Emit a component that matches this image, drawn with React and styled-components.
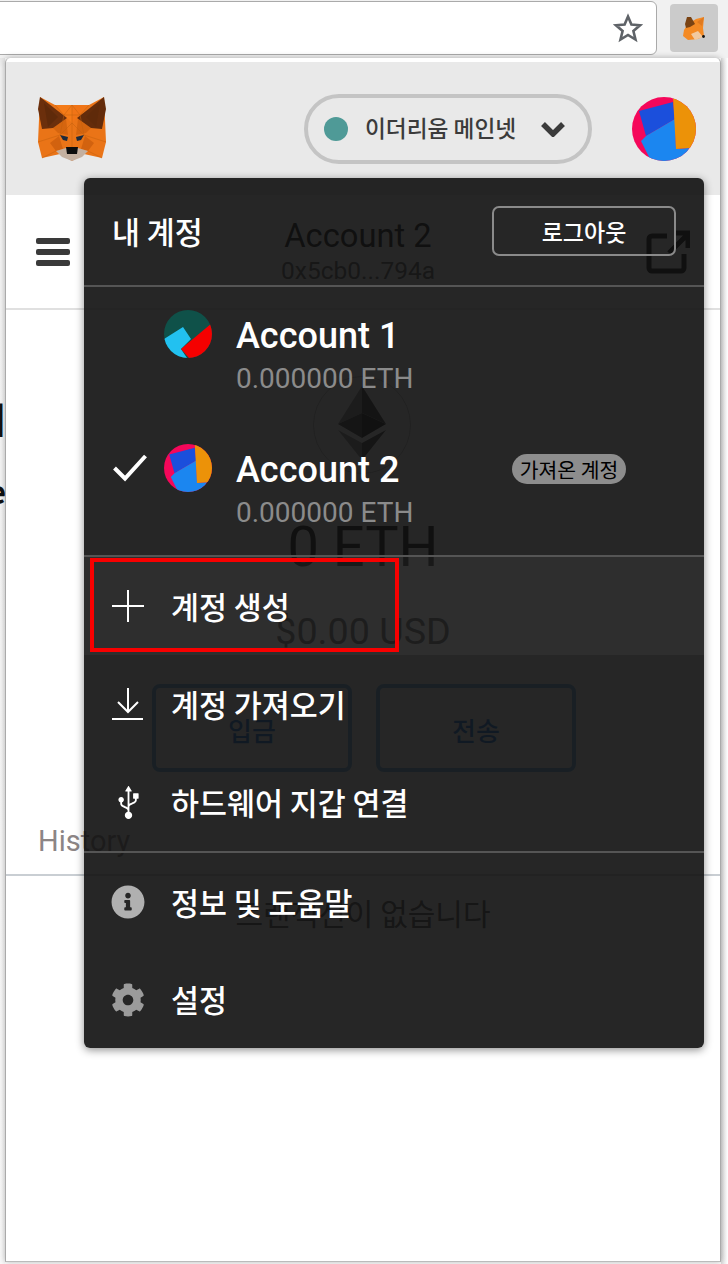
import React from "react";
import styled, { createGlobalStyle } from "styled-components";
import { FaInfoCircle, FaCog, FaUsb } from "react-icons/fa";

const Global = createGlobalStyle`
  html, body { margin: 0; padding: 0; background: #fff; overflow: hidden; }
  * { box-sizing: border-box; }
  body { font-family: Roboto, "Noto Sans CJK KR", sans-serif; }
`;

const Page = styled.div`
  width: 728px;
  height: 1264px;
  overflow: hidden;
  display: flex;
  flex-direction: column;
`;
const Toolbar = styled.div`
  height: 58px;
  flex: none;
  display: flex;
  background: #f1f1f1;
  padding-top: 1px;
`;
const AddressBar = styled.div`
  width: 658px;
  height: 54px;
  margin-left: -1px;
  background: #fff;
  border: 1px solid #aaa;
  border-radius: 0 6px 6px 0;
  display: flex;
  align-items: center;
  justify-content: flex-end;
  padding-right: 13px;
`;
const ExtensionButton = styled.div`
  width: 48px;
  height: 48px;
  margin: 3px 0 0 13px;
  background: #cbcbcb;
  border-radius: 4px;
  display: flex;
  align-items: center;
  justify-content: center;
`;
const Stage = styled.div`
  flex: 1;
  display: grid;
  grid-template-columns: 5px 716px 7px;
  min-height: 0;
`;
const Behind = styled.div`
  overflow: hidden;
  display: flex;
  flex-direction: column;
  align-items: flex-end;
  padding-top: 340px;
  background: linear-gradient(#e8e8e8 0, #f4f4f4 10px, #fafafa 100%);
  color: #111;
  white-space: nowrap;
`;
const BehindWord = styled.span`
  font: ${(p) => (p.$bold ? "700 32px/40px" : "400 36px/40px")} "Noto Sans CJK KR", sans-serif;
  margin-bottom: ${(p) => p.$gap || 0}px;
  margin-right: -1px;
`;
const Popup = styled.div`
  position: relative;
  height: 1204px;
  background: #fff;
  border-left: 1px solid #aaa;
  border-right: 1px solid #aaa;
  border-bottom: 1px solid #bbb;
  border-radius: 5px 5px 0 0;
  box-shadow: 0 0 6px rgba(0, 0, 0, 0.3);
  padding-top: 4px;
  display: flex;
  flex-direction: column;
`;
const AppHeader = styled.header`
  height: 133px;
  flex: none;
  background: #e9e9e9;
  display: flex;
  align-items: center;
  padding: 0 24px 0 32px;
`;
const NetworkPill = styled.div`
  margin-left: auto;
  margin-right: 40px;
  width: 288px;
  height: 70px;
  border: 4px solid #c4c4c4;
  border-radius: 35px;
  display: flex;
  align-items: center;
  padding-left: 16px;
`;
const NetworkDot = styled.span`
  width: 24px;
  height: 24px;
  border-radius: 50%;
  background: #4f9a97;
  flex: none;
`;
const NetworkName = styled.span`
  margin-left: 17px;
  font: 500 22.7px/1 "Noto Sans CJK KR", sans-serif;
  color: #3b3b3b;
  width: 176px;
  white-space: nowrap;
`;
const AccountBar = styled.div`
  height: 115px;
  flex: none;
  display: grid;
  grid-template-columns: 34px 1fr 44px;
  align-items: center;
  padding: 0 30px;
  border-bottom: 2px solid #e0e0e0;
`;
const Burger = styled.div`
  display: flex;
  flex-direction: column;
  gap: 5px;
`;
const BurgerBar = styled.span`
  height: 6px;
  border-radius: 2px;
  background: #3a3a3a;
`;
const AccountTitle = styled.div`
  text-align: center;
`;
const AccountName = styled.div`
  font: 400 32.7px/38px Roboto, sans-serif;
  color: #000;
`;
const AccountAddress = styled.div`
  margin-top: 1px;
  font: 400 24.5px/30px Roboto, sans-serif;
  color: #555;
`;
const Balance = styled.section`
  flex: none;
  display: flex;
  flex-direction: column;
  align-items: center;
  padding-top: 66px;
`;
const EthCircle = styled.div`
  width: 98px;
  height: 98px;
  margin-right: 2px;
  border: 1px solid #bbb;
  border-radius: 50%;
  padding: 0 1px 5px 0;
  display: flex;
  align-items: center;
  justify-content: center;
`;
const EthAmount = styled.div`
  margin-top: 40px;
  font: 400 56px/66px Roboto, sans-serif;
  color: #000;
`;
const UsdAmount = styled.div`
  margin-top: 30px;
  font: 400 37.7px/42px Roboto, sans-serif;
  color: #333;
`;
const Actions = styled.div`
  margin: 32px 0 0 2px;
  display: flex;
  gap: 24px;
`;
const ActionButton = styled.div`
  width: 200px;
  height: 88px;
  border: 4px solid #6ab0e8;
  border-radius: 8px;
  padding-top: 4px;
  display: flex;
  align-items: center;
  justify-content: center;
  font: 500 26px/1 "Noto Sans CJK KR", sans-serif;
  color: #0a6fd6;
`;
const HistoryTitle = styled.div`
  margin-top: 53px;
  padding-left: 32px;
  height: 51px;
  font: 400 29px/32px Roboto, sans-serif;
  color: #8c8585;
  border-bottom: 2px solid #c9ced3;
`;
const EmptyNote = styled.div`
  margin-top: 16px;
  text-align: center;
  font: 400 30px/40px "Noto Sans CJK KR", sans-serif;
  color: #444;
`;
const Gutter = styled.div`
  background: linear-gradient(90deg, #ddd 0, #f6f6f6 5px, #fff 100%);
`;

const Menu = styled.nav`
  position: absolute;
  left: 78px;
  top: 120px;
  width: 620px;
  height: 870px;
  background: rgba(18, 18, 18, 0.914);
  border-radius: 6px;
  box-shadow: 0 2px 8px rgba(0, 0, 0, 0.45);
  color: #fff;
`;
const MenuHeader = styled.div`
  height: 107px;
  display: flex;
  align-items: center;
  justify-content: space-between;
  padding: 0 28px 0 28px;
`;
const MenuTitle = styled.div`
  font: 500 30.4px/1 "Noto Sans CJK KR", sans-serif;
  margin-top: -1px;
`;
const LogoutButton = styled.div`
  width: 184px;
  height: 50px;
  margin-top: -1px;
  border: 2px solid #8a8a8a;
  border-radius: 7px;
  display: flex;
  align-items: center;
  justify-content: center;
  font: 500 23px/1 "Noto Sans CJK KR", sans-serif;
`;
const Divider = styled.div`
  height: 2px;
  background: #555;
`;
const Accounts = styled.div`
  height: 268px;
  padding: 23px 0 0 29px;
  display: flex;
  flex-direction: column;
  gap: 50px;
`;
const AccountRow = styled.div`
  height: 84px;
  display: grid;
  grid-template-columns: 51px 48px 300px auto;
  align-items: start;
`;
const CheckSlot = styled.div`
  padding-top: 10px;
`;
const AccountInfo = styled.div`
  padding-left: 24px;
`;
const RowName = styled.div`
  font: 500 36px/52px Roboto, sans-serif;
  white-space: nowrap;
`;
const RowBalance = styled.div`
  margin-top: 1px;
  font: 400 28px/32px Roboto, sans-serif;
  color: #8b8b8b;
  white-space: nowrap;
`;
const Badge = styled.div`
  justify-self: start;
  margin-top: 10px;
  width: 114px;
  height: 30px;
  border-radius: 15px;
  background: #8d8d8d;
  color: #000;
  display: flex;
  align-items: center;
  justify-content: center;
  font: 400 20.4px/1 "Noto Sans CJK KR", sans-serif;
  white-space: nowrap;
`;
const MenuRow = styled.div`
  height: ${(p) => p.$h || 98}px;
  display: flex;
  align-items: center;
  gap: 27px;
  padding-left: 28px;
  background: ${(p) => (p.$active ? "rgba(255,255,255,0.04)" : "transparent")};
  font: 500 30.4px/1 "Noto Sans CJK KR", sans-serif;
  white-space: nowrap;
`;
const IconSlot = styled.span`
  width: 32px;
  height: 32px;
  flex: none;
  display: flex;
  align-items: center;
  justify-content: center;
  color: ${(p) => p.$color || "#fff"};
  svg {
    flex: none;
  }
`;
const UsbIcon = styled(FaUsb)`
  transform: rotate(-90deg);
`;
const Highlight = styled.div`
  position: absolute;
  left: 6px;
  top: 380px;
  width: 309px;
  height: 94px;
  border: 4px solid #f80000;
`;

const FoxLogo = () => (
  <svg width="68" height="64" viewBox="0 0 68 64">
    <polygon points="2,0 17,8 51,8 66,0 68,45 64,61 46,57 34,64 22,57 4,61 0,45" fill="#ea7417" />
    <polygon points="17,8 34,8 34,26 26,18" fill="#f47b18" />
    <polygon points="51,8 34,8 34,26 42,18" fill="#f07416" />
    <polygon points="15,31 28,22 30,38 20,36" fill="#d5650f" />
    <polygon points="53,31 40,22 38,38 48,36" fill="#d5650f" />
    <polygon points="12,46 21,39 25,52 18,54" fill="#d2620f" />
    <polygon points="56,46 47,39 43,52 50,54" fill="#d2620f" />
    <polygon points="2,0 29,21 15,31 4,32 0,12" fill="#6b2f0c" />
    <polygon points="66,0 39,21 53,31 64,32 68,12" fill="#642c0b" />
    <polygon points="6,6 20,20 10,30" fill="#5f2a0a" />
    <polygon points="62,6 48,20 58,30" fill="#5f2a0a" />
    <polygon points="22,38 30,40 29,44 25,43" fill="#1d2b3c" />
    <polygon points="46,38 38,40 39,44 43,43" fill="#1d2b3c" />
    <polygon points="18,54 28,51 40,51 50,54 44,60 34,64 24,60" fill="#c4b0a0" />
    <polygon points="28,50 40,50 39,57 29,57" fill="#0c0c0c" />
    <g stroke="#c2600f" strokeWidth="0.5" fill="none">
      <path d="M17 8 26 18 34 8 42 18 51 8M26 18 42 18M34 8V50M0 45 22 38 34 26 46 38 68 45M4 61 18 54M64 61 50 54M26 18 22 38M42 18 46 38" />
    </g>
  </svg>
);

const SmallFox = () => (
  <svg width="22" height="24" viewBox="0 0 22 24">
    <polygon points="5,8 13,3 21,1 20,12 21,20 15,23 5,24 0,20 1,14" fill="#f48a24" />
    <polygon points="2,8 4,1 8,1 12,8 7,11 3,12" fill="#7a4313" />
    <polygon points="14,6 21,1 19,10" fill="#e07a20" />
    <polygon points="8,18 15,15 20,21 12,24" fill="#f1c9a0" />
    <circle cx="20.5" cy="20.5" r="1.4" fill="#111" />
  </svg>
);

const JazzTwo = ({ size }) => (
  <svg width={size} height={size} viewBox="0 0 64 64">
    <defs>
      <clipPath id={`jazz-two-${size}`}>
        <circle cx="32" cy="32" r="32" />
      </clipPath>
    </defs>
    <g clipPath={`url(#jazz-two-${size})`}>
      <rect width="64" height="64" fill="#f5075a" />
      <polygon points="7,14 41,5 43,22 14,39" fill="#1b4fdc" />
      <polygon points="14,39 43,22 44,52 57,51 50,70 22,70 9,44" fill="#1b86f0" />
      <polygon points="41,0 70,0 70,50 57,51 44,52" fill="#ec9208" />
    </g>
  </svg>
);

const JazzOne = () => (
  <svg width="48" height="48" viewBox="0 0 48 48">
    <defs>
      <clipPath id="jazz-one">
        <circle cx="24" cy="24" r="24" />
      </clipPath>
    </defs>
    <g clipPath="url(#jazz-one)">
      <rect width="48" height="48" fill="#0f5149" />
      <polygon points="0,29 19,17 27,29 17,39 23,48 0,48" fill="#22c1f0" />
      <polygon points="17,39 48,13 48,48 25,48" fill="#f50000" />
    </g>
  </svg>
);

const EthLogo = () => (
  <svg width="48" height="74" viewBox="0 0 48 74">
    <polygon points="24,0 0,38 24,27" fill="#8c8c8c" />
    <polygon points="24,0 48,38 24,27" fill="#343434" />
    <polygon points="0,38 24,27 24,52" fill="#3c3c3c" />
    <polygon points="48,38 24,27 24,52" fill="#141414" />
    <polygon points="0,44 24,57 24,74" fill="#8c8c8c" />
    <polygon points="48,44 24,57 24,74" fill="#393939" />
  </svg>
);

const ExternalIcon = () => (
  <svg width="44" height="44" viewBox="0 0 44 44" fill="none" stroke="#000" strokeWidth="5">
    <path d="M21 6H6a3 3 0 0 0-3 3v29a3 3 0 0 0 3 3h29a3 3 0 0 0 3-3V24" />
    <path d="M23 23 42 4M28 3h14v15" />
  </svg>
);

const StarIcon = () => (
  <svg width="30" height="30" viewBox="0 0 30 30" fill="none" stroke="#5f6368" strokeWidth="2.6">
    <path d="M15 3.5 18.4 11.6 27 12.3 20.4 18 22.5 26.5 15 22 7.5 26.5 9.6 18 3 12.3 11.6 11.6Z" />
  </svg>
);

const Chevron = () => (
  <svg width="24" height="16" viewBox="0 0 24 16" fill="none" stroke="#3b3b3b" strokeWidth="5.5">
    <path d="M2 3 12 13 22 3" />
  </svg>
);

const CheckIcon = () => (
  <svg width="34" height="28" viewBox="0 0 34 28" fill="none" stroke="#fff" strokeWidth="4">
    <path d="M1.5 14 12 24.5 32.5 2" />
  </svg>
);

const PlusIcon = () => (
  <svg width="32" height="32" viewBox="0 0 32 32" stroke="#fff" strokeWidth="2">
    <path d="M16 0V32M0 16H32" />
  </svg>
);

const DownloadIcon = () => (
  <svg width="32" height="32" viewBox="0 0 32 32" fill="none" stroke="#fff" strokeWidth="2">
    <path d="M16 0V24M6 14 16 24 26 14M0 31H31" />
  </svg>
);

const menuRows = [
  { label: "계정 생성", icon: <PlusIcon />, active: true },
  { label: "계정 가져오기", icon: <DownloadIcon /> },
  { label: "하드웨어 지갑 연결", icon: <UsbIcon size={33} /> },
];

export default function App() {
  return (
    <Page>
      <Global />
      <Toolbar>
        <AddressBar>
          <StarIcon />
        </AddressBar>
        <ExtensionButton>
          <SmallFox />
        </ExtensionButton>
      </Toolbar>
      <Stage>
        <Behind>
          <BehindWord $gap={32}>계</BehindWord>
          <BehindWord $bold>e</BehindWord>
        </Behind>
        <Popup>
          <AppHeader>
            <FoxLogo />
            <NetworkPill>
              <NetworkDot />
              <NetworkName>이더리움 메인넷</NetworkName>
              <Chevron />
            </NetworkPill>
            <JazzTwo size={64} />
          </AppHeader>
          <AccountBar>
            <Burger>
              <BurgerBar />
              <BurgerBar />
              <BurgerBar />
            </Burger>
            <AccountTitle>
              <AccountName>Account 2</AccountName>
              <AccountAddress>0x5cb0...794a</AccountAddress>
            </AccountTitle>
            <ExternalIcon />
          </AccountBar>
          <Balance>
            <EthCircle>
              <EthLogo />
            </EthCircle>
            <EthAmount>0 ETH</EthAmount>
            <UsdAmount>$0.00 USD</UsdAmount>
            <Actions>
              <ActionButton>입금</ActionButton>
              <ActionButton>전송</ActionButton>
            </Actions>
          </Balance>
          <HistoryTitle>History</HistoryTitle>
          <EmptyNote>트랜잭션이 없습니다</EmptyNote>

          <Menu>
            <MenuHeader>
              <MenuTitle>내 계정</MenuTitle>
              <LogoutButton>로그아웃</LogoutButton>
            </MenuHeader>
            <Divider />
            <Accounts>
              <AccountRow>
                <CheckSlot />
                <JazzOne />
                <AccountInfo>
                  <RowName>Account 1</RowName>
                  <RowBalance>0.000000 ETH</RowBalance>
                </AccountInfo>
              </AccountRow>
              <AccountRow>
                <CheckSlot>
                  <CheckIcon />
                </CheckSlot>
                <JazzTwo size={48} />
                <AccountInfo>
                  <RowName>Account 2</RowName>
                  <RowBalance>0.000000 ETH</RowBalance>
                </AccountInfo>
                <Badge>가져온 계정</Badge>
              </AccountRow>
            </Accounts>
            <Divider />
            {menuRows.map((row) => (
              <MenuRow key={row.label} $active={row.active}>
                <IconSlot>{row.icon}</IconSlot>
                {row.label}
              </MenuRow>
            ))}
            <Divider />
            <MenuRow>
              <IconSlot $color="#b0b0b0">
                <FaInfoCircle size={34} />
              </IconSlot>
              정보 및 도움말
            </MenuRow>
            <MenuRow $h={97}>
              <IconSlot $color="#9b9b9b">
                <FaCog size={34} />
              </IconSlot>
              설정
            </MenuRow>
            <Highlight />
          </Menu>
        </Popup>
        <Gutter />
      </Stage>
    </Page>
  );
}
